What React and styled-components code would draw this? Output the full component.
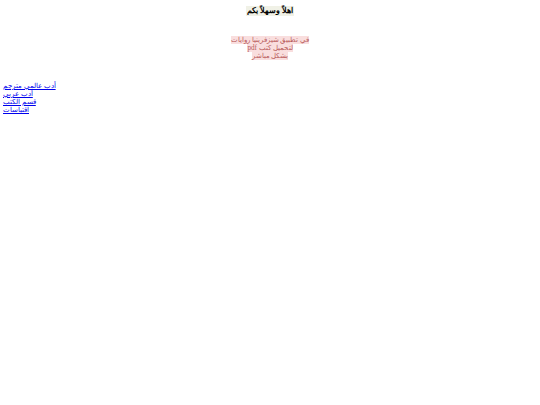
import React from "react"
import styled, {createGlobalStyle} from "styled-components"

const GlobalStyle = createGlobalStyle`
    html, body {
        margin: 0;
        background: #ffffff;
    }
    body {
        padding: 6px 3px;
        font-family: "Liberation Serif", "DejaVu Serif", serif;
        font-size: 7.2px;
        line-height: 8px;
        color: #000000;
    }
`

const Page = styled.div`
    display: flex;
    flex-direction: column;
`

const Header = styled.div`
    display: flex;
    justify-content: center;
    margin: 0 0 20px 0;
`

const Title = styled.span`
    font-weight: bold;
    font-size: 7.7px;
    line-height: 10px;
    background: #f0f1e6;
    padding: 0 1px;
`

const Intro = styled.div`
    text-align: center;
    margin: 0 0 22px 0;
`

const IntroLine = styled.span`
    background: #f9dede;
    color: #b85a5a;
`

const Links = styled.nav`
    display: flex;
    flex-direction: column;
    align-items: flex-start;
`

const Link = styled.a`
    color: #0000ee;
    text-decoration: underline;
    line-height: 8px;
`

const sections = ["أدب عالمي مترجم", "أدب عربي", "قسم الكتب", "اقتباسات"]

const introLines = ["في تطبيق شيزفرينيا روايات", "pdf لتحميل كتب", "بشكل مباشر"]

const App = () => (
    <Page>
        <GlobalStyle />
        <Header>
            <Title>اهلاً وسهلاً بكم</Title>
        </Header>

        <Intro>
            {introLines.map((line, i) => (
                <React.Fragment key={line}>
                    {i > 0 && <br />}
                    <IntroLine>{line}</IntroLine>
                </React.Fragment>
            ))}
        </Intro>

        <Links>
            {sections.map(name => (
                <Link key={name} href="#">
                    {name}
                </Link>
            ))}
        </Links>
    </Page>
)

export default App
